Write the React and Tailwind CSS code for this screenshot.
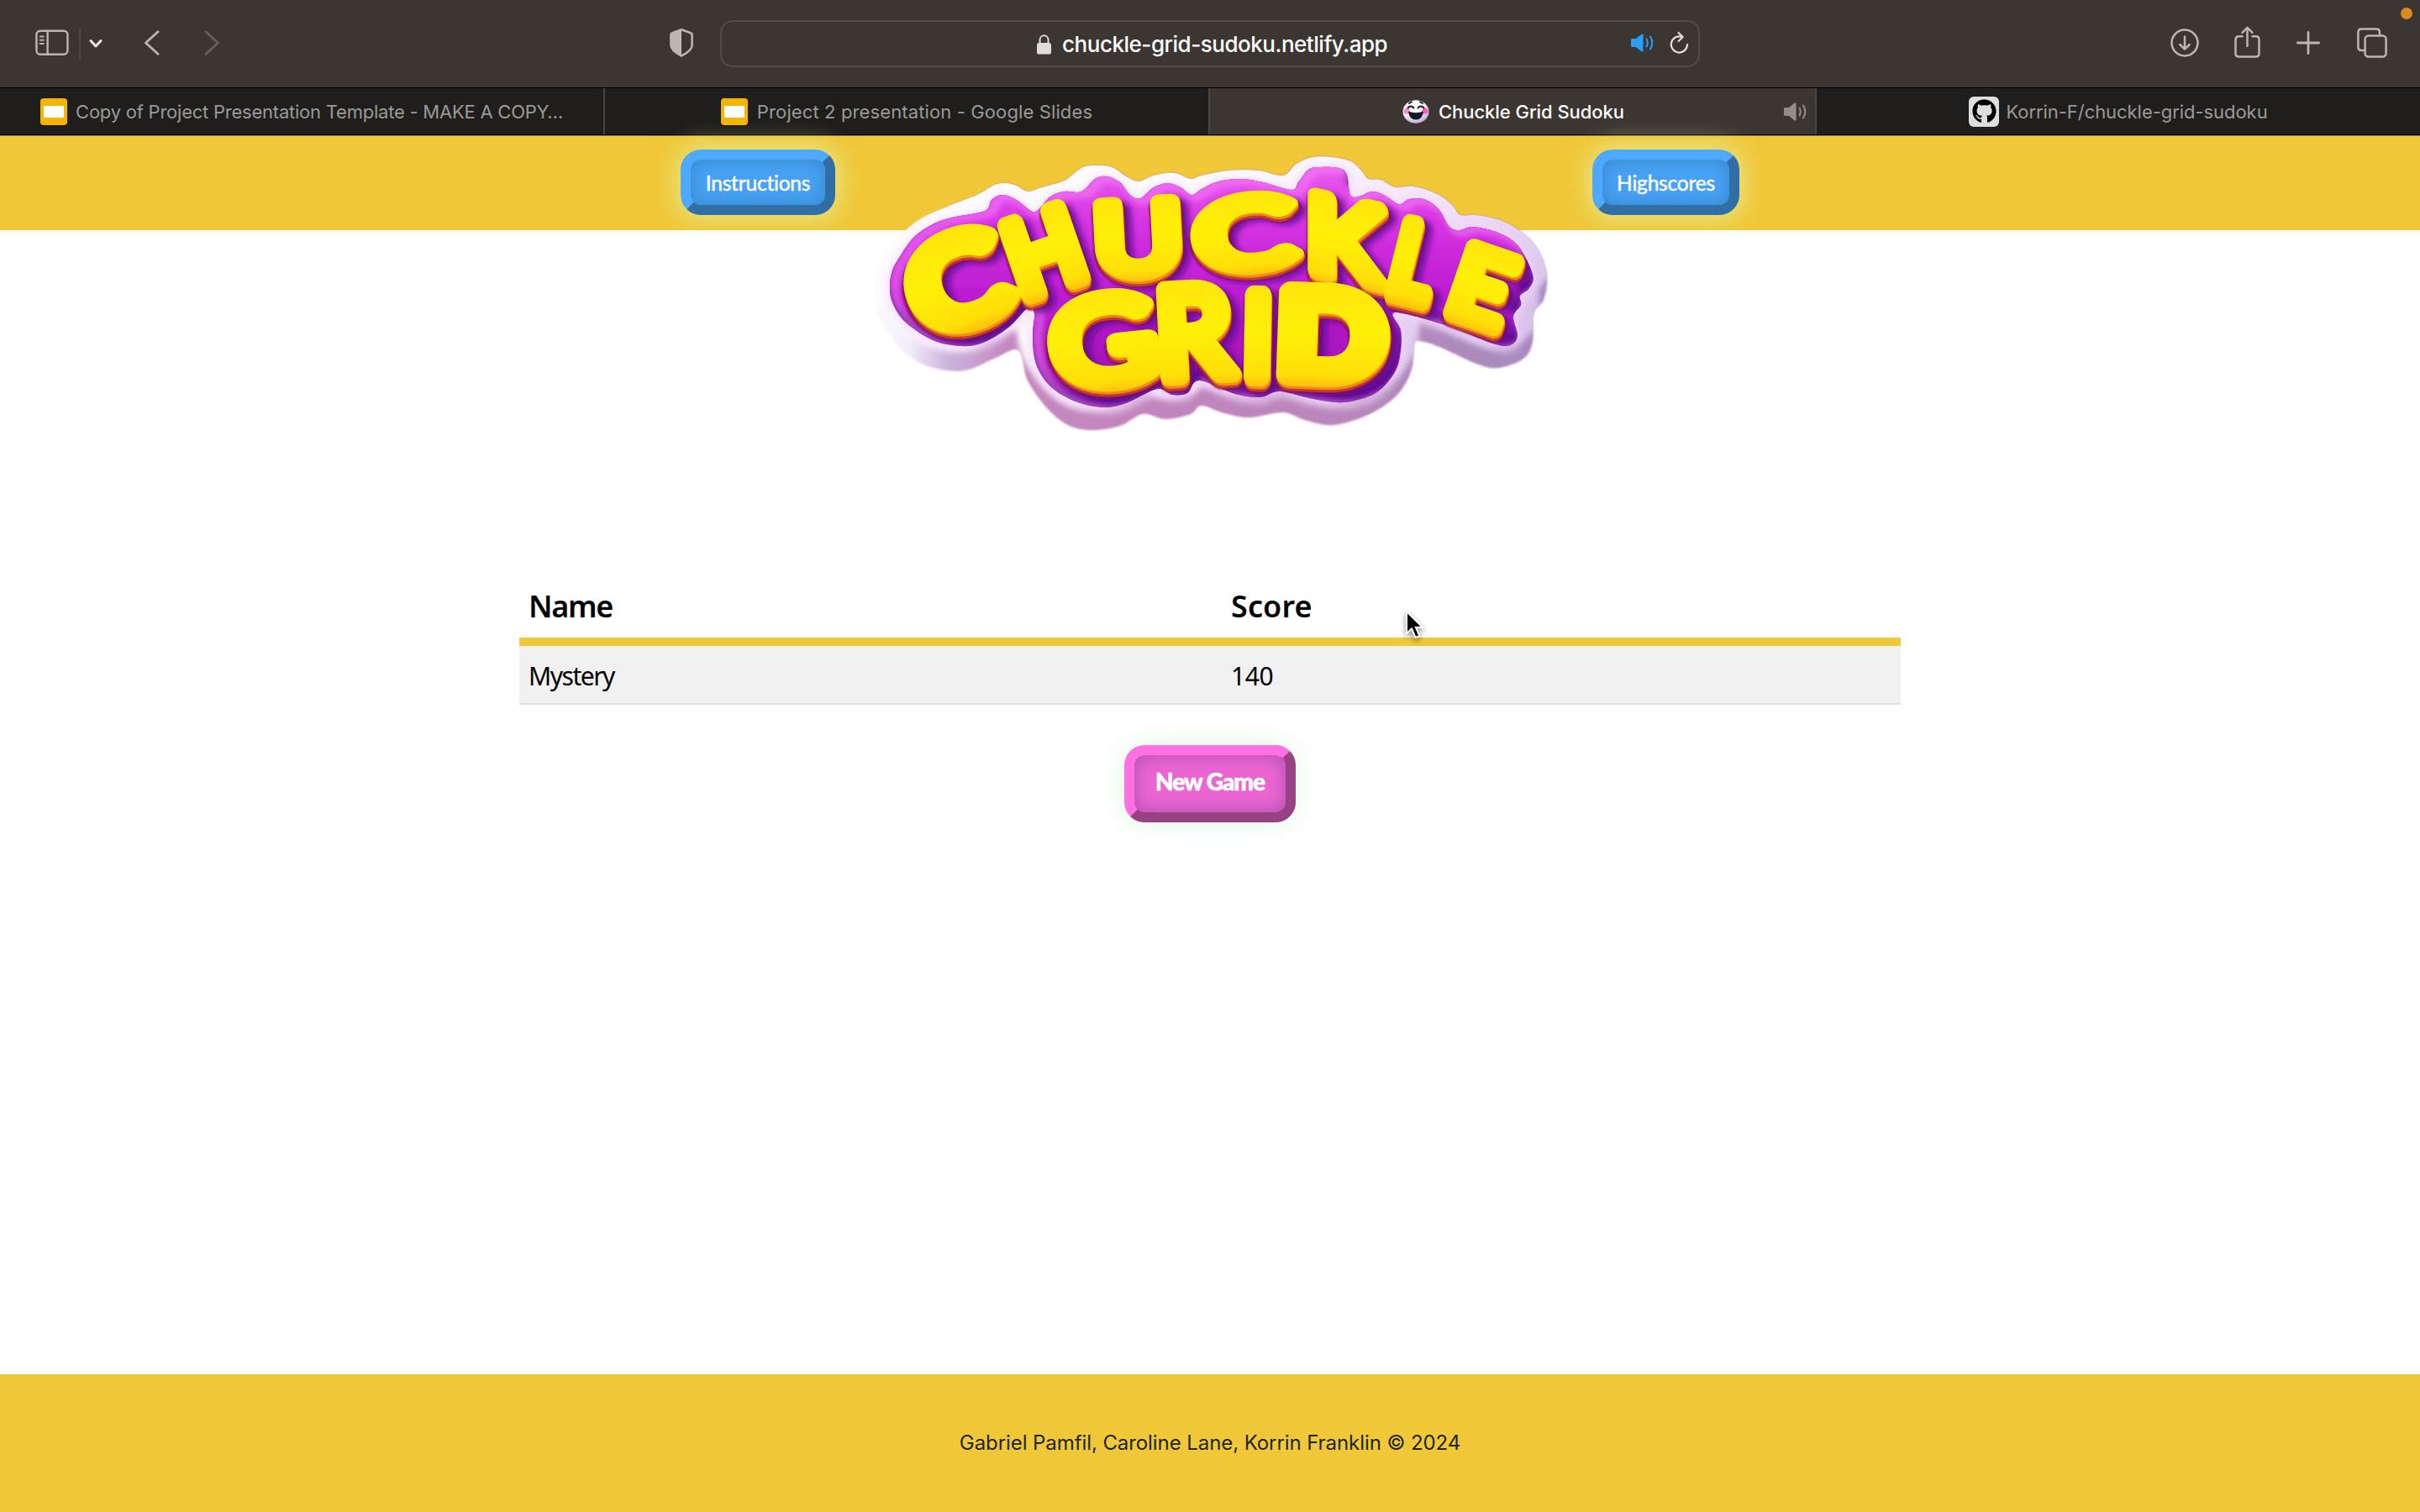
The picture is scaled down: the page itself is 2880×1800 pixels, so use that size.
import React from "react";
import { FaGithub } from "react-icons/fa";

/* ---------- browser chrome ---------- */

const stroke = { fill: "none", stroke: "#bcb6b2", strokeLinecap: "round", strokeLinejoin: "round" };

const SidebarIcon = () => (
  <svg width="40" height="32" viewBox="0 0 40 32" {...stroke} strokeWidth="2.4">
    <rect x="1.4" y="1.8" width="37" height="28" rx="4.5" />
    <path d="M14.6 2v28" />
    <path d="M5.8 8.5h4M5.8 12.8h4M5.8 17.1h4" strokeWidth="2" />
  </svg>
);

const ShieldIcon = () => (
  <svg width="28" height="34" viewBox="0 0 28 34">
    <path d="M14 1.3 25 5.2q1.6.6 1.6 2.2V20q0 6-12.6 12.6Q1.4 26 1.4 20V7.4Q1.4 5.8 3 5.2Z" fill="none" stroke="#bcb6b2" strokeWidth="2.5" strokeLinejoin="round" />
    <path d="M14 1 3 5Q1 5.8 1 7.5V20Q1 26 14 33Z" fill="#bcb6b2" />
  </svg>
);

const LockIcon = () => (
  <svg width="17" height="24" viewBox="0 0 17 24">
    <rect x="0" y="10" width="17" height="13.5" rx="2.6" fill="#dedddc" />
    <path d="M3.5 11V6.5a5 5.2 0 0 1 10 0V11" fill="none" stroke="#dedddc" strokeWidth="2" />
  </svg>
);

const SpeakerIcon = ({ color }) => (
  <svg width="28" height="22" viewBox="0 0 28 22" fill="none" stroke={color} strokeWidth="2" strokeLinecap="round">
    <path d="M0 7.5Q0 6 1.5 6H6L12.5.7Q14.5-.3 14.5 1.6V20.4Q14.5 22.3 12.5 21.3L6 16H1.5Q0 16 0 14.5Z" fill={color} stroke="none" />
    <path d="M18.5 6.5Q21 11 18.5 15.5M23 3.5Q27.6 11 23 18.5" />
  </svg>
);

const ReloadIcon = () => (
  <svg width="23" height="28" viewBox="0 0 23 28" fill="none" stroke="#dedddc" strokeWidth="2.2" strokeLinecap="round" strokeLinejoin="round">
    <path d="M14.6 6.9A9.6 9.6 0 1 0 21 16" />
    <path d="M10.5 2 15.6 7l-5 5" />
  </svg>
);

const DownloadIcon = () => (
  <svg width="34" height="34" viewBox="0 0 34 34" {...stroke} strokeWidth="2.5">
    <circle cx="17" cy="17" r="15.5" />
    <path d="M17 9.5v15M11.3 19 17 24.7 22.7 19" />
  </svg>
);

const ShareIcon = () => (
  <svg width="31" height="38" viewBox="0 0 31 38" {...stroke} strokeWidth="2.5">
    <path d="M9.5 12.2H5.5q-4 0-4 4V32.5q0 4 4 4h20q4 0 4-4V16.2q0-4-4-4h-4" />
    <path d="M15.5 24V2M9.5 7.8l6-6 6 6" />
  </svg>
);

const PlusIcon = () => (
  <svg width="28" height="28" viewBox="0 0 28 28" {...stroke} strokeWidth="2.8">
    <path d="M14 1.4v25.2M1.4 14h25.2" />
  </svg>
);

const TabsIcon = () => (
  <svg width="36" height="36" viewBox="0 0 36 36" {...stroke} strokeWidth="2.5">
    <rect x="9.6" y="9.6" width="25" height="25" rx="4" />
    <path d="M9 27H5.4q-4 0-4-4V5.4q0-4 4-4H23q4 0 4 4V9" />
  </svg>
);

const SlidesIcon = () => (
  <span className="flex h-8 w-8 items-center justify-center rounded-[4px] bg-[#f6b402]">
    <span className="h-[14px] w-6 bg-white" />
  </span>
);

const SmileyIcon = () => (
  <svg width="32" height="28" viewBox="0 0 32 28">
    <defs>
      <radialGradient id="face" cx=".4" cy=".3" r=".75">
        <stop offset=".5" stopColor="#fff" />
        <stop offset="1" stopColor="#b79bd0" />
      </radialGradient>
    </defs>
    <ellipse cx="16" cy="14" rx="15.5" ry="13.8" fill="url(#face)" />
    <circle cx="5.2" cy="13.2" r="3.6" fill="#ff86c8" />
    <circle cx="26.8" cy="13.2" r="3.6" fill="#ff5fae" />
    <path d="M6.5 9.5q3.5-4 7 0M18.5 9.5q3.5-4 7 0M8 4l3-1.8M24 4l-3-1.8" fill="none" stroke="#15182a" strokeWidth="1.9" strokeLinecap="round" />
    <path d="M7 13.5Q16 17 25 13.5 24 23.5 16 23.5T7 13.5Z" fill="#15182a" />
  </svg>
);

const Toolbar = () => (
  <div className="relative flex h-[104px] items-center bg-[#3c3633]">
    <div className="ml-[42px] mt-[-2px] flex items-center"><SidebarIcon /></div>
    <div className="ml-[12px] h-9 w-[2px] bg-[#4f4946]" />
    <svg className="ml-[10px] mt-[-1px]" width="16" height="12" viewBox="0 0 16 12" fill="none" stroke="#ece9e7" strokeWidth="3" strokeLinecap="round" strokeLinejoin="round"><path d="M2 2.5 8 9l6-6.5" /></svg>
    <svg className="ml-[49px] mt-[-3px]" width="19" height="30" viewBox="0 0 19 30" {...stroke} strokeWidth="2.8"><path d="M17 1.8 2.5 15 17 28.2" /></svg>
    <svg className="ml-[53px] mt-[-3px]" width="19" height="30" viewBox="0 0 19 30" {...stroke} stroke="#66605d" strokeWidth="2.8"><path d="M2 1.8 16.5 15 2 28.2" /></svg>
    <div className="ml-[535px] mt-[-2px]"><ShieldIcon /></div>
    <div className="ml-[32px] flex h-[56px] w-[1166px] items-center rounded-[15px] border-2 border-[#524d49]">
      <div className="ml-[375px] mt-[1px]"><LockIcon /></div>
      <span className="ml-[13px] mt-[1px] w-[389px] whitespace-nowrap font-['Inter'] text-[26px] font-medium leading-[40px] tracking-[-0.47px] text-white">chuckle-grid-sudoku.netlify.app</span>
      <div className="ml-[288px] mt-[-3px]"><SpeakerIcon color="#2a9dfb" /></div>
      <div className="ml-[18px] mt-[-3px]"><ReloadIcon /></div>
    </div>
    <div className="ml-[560px] mt-[-2px]"><DownloadIcon /></div>
    <div className="ml-[42px] mt-[-5px]"><ShareIcon /></div>
    <div className="ml-[43px] mt-[-3px]"><PlusIcon /></div>
    <div className="ml-[44px] mt-[-3px]"><TabsIcon /></div>
    <span className="absolute right-[9px] top-[9px] h-[14px] w-[14px] rounded-full bg-[#d98a24]" />
  </div>
);

const tabs = [
  { title: "Copy of Project Presentation Template - MAKE A COPY…", icon: <SlidesIcon />, cls: "w-[720px] border-r-2 border-[#4a4542] bg-[#1f1e1c] text-[#9b9a98]", text: "ml-[10px] tracking-[-0.23px]" },
  { title: "Project 2 presentation - Google Slides", icon: <SlidesIcon />, cls: "w-[720px] border-r-2 border-[#4a4542] bg-[#1f1e1c] text-[#9b9a98]", text: "ml-[11px] tracking-[0.12px]" },
  { title: "Chuckle Grid Sudoku", icon: <SmileyIcon />, cls: "w-[720px] bg-[#3c3633] text-white font-medium", text: "ml-[11px] mr-[-2px] tracking-[-0.06px]", audio: true },
  { title: "Korrin-F/chuckle-grid-sudoku", icon: <span className="flex h-9 w-9 items-center justify-center rounded-[6px] bg-[#dedede]"><FaGithub size={29} color="#000" /></span>, cls: "w-[720px] border-l-2 border-[#4a4542] bg-[#1f1e1c] text-[#9b9a98]", text: "ml-[8px] tracking-[-0.05px]" },
];

const TabBar = () => (
  <div className="flex h-[57px] border-y border-black">
    {tabs.map((t) => (
      <div key={t.title} className={`relative flex items-center justify-center font-['Inter'] text-[22px] ${t.cls}`}>
        {t.icon}
        <span className={`whitespace-nowrap leading-[32px] ${t.text}`}>{t.title}</span>
        {t.audio && <div className="absolute right-[9px] top-[17px]"><SpeakerIcon color="#918e8c" /></div>}
      </div>
    ))}
  </div>
);

/* ---------- logo ---------- */

/* Closed Catmull-Rom curve through the given points. */
const smooth = (p) => {
  const n = p.length;
  let d = `M${p[0]}`;
  for (let i = 0; i < n; i++) {
    const a = p[(i - 1 + n) % n], b = p[i], c = p[(i + 1) % n], e = p[(i + 2) % n];
    d += `C${b[0] + (c[0] - a[0]) / 6},${b[1] + (c[1] - a[1]) / 6} ${c[0] - (e[0] - b[0]) / 6},${c[1] - (e[1] - b[1]) / 6} ${c}`;
  }
  return d + "Z";
};

const rim = smooth([[1040,347],[1047,310],[1070,282],[1097,260],[1130,245],[1163,232],[1187,219],[1207,220],[1223,228],[1240,223],[1267,215],[1287,200],[1303,197],[1323,199],[1340,210],[1355,216],[1373,209],[1397,206],[1417,213],[1430,209],[1463,203],[1497,203],[1527,209],[1543,195],[1563,187],[1583,187],[1607,192],[1620,203],[1628,213],[1643,214],[1660,223],[1683,222],[1710,231],[1727,243],[1738,256],[1757,256],[1787,263],[1813,278],[1832,300],[1841,330],[1837,357],[1825,373],[1824,407],[1813,427],[1783,438],[1757,433],[1713,413],[1690,406],[1683,410],[1680,440],[1663,470],[1630,493],[1587,506],[1553,500],[1527,491],[1487,497],[1457,492],[1430,483],[1417,493],[1387,499],[1360,493],[1333,507],[1300,512],[1273,507],[1247,487],[1223,453],[1212,417],[1183,427],[1153,440],[1127,441],[1097,433],[1070,413],[1047,380]]);

const board = smooth([[1059,340],[1062,322],[1070,307],[1087,283],[1110,267],[1133,259],[1172,251],[1180,238],[1193,232],[1210,238],[1227,251],[1235,250],[1250,234],[1267,228],[1287,228],[1303,213],[1317,210],[1333,217],[1345,232],[1357,236],[1373,223],[1390,218],[1405,223],[1418,232],[1430,225],[1450,216],[1477,213],[1503,217],[1537,226],[1545,217],[1557,202],[1570,199],[1593,200],[1603,208],[1607,232],[1617,234],[1633,228],[1647,232],[1665,243],[1677,237],[1697,238],[1713,250],[1725,270],[1737,274],[1753,270],[1783,277],[1807,293],[1824,327],[1820,343],[1809,352],[1810,363],[1801,377],[1806,400],[1797,411],[1777,409],[1720,387],[1660,372],[1667,393],[1667,417],[1660,443],[1637,468],[1600,479],[1563,475],[1523,466],[1500,473],[1470,469],[1427,453],[1413,468],[1395,470],[1377,463],[1340,480],[1313,485],[1280,478],[1250,460],[1233,433],[1229,400],[1231,373],[1223,367],[1200,390],[1170,408],[1143,412],[1110,405],[1077,383],[1062,360]]);

/* ink: left, right, ascent, descent of the glyph at 100px; box: width and height it fills */
const letters = [
  { ch: "C", ink: [4, 61, 73, 1], at: [1137, 336], box: [126, 128], rot: -20, s: 17 },
  { ch: "H", ink: [9, 65, 72, 0], at: [1241, 300], box: [84, 110], rot: -19, s: 19 },
  { ch: "U", ink: [8, 65, 72, 1], at: [1354, 284], box: [104, 103], rot: -3, s: 15 },
  { ch: "C", ink: [4, 61, 73, 1], at: [1479, 278], box: [128, 101], rot: -5, s: 15 },
  { ch: "K", ink: [9, 63, 72, 0], at: [1603, 286], box: [94, 110], rot: 0, skew: 12, s: 16 },
  { ch: "L", ink: [9, 45, 72, 0], at: [1683, 312], box: [52, 110], rot: 14, s: 19 },
  { ch: "E", ink: [9, 52, 72, 0], at: [1765, 342], box: [72, 104], rot: 19, s: 17 },
  { ch: "G", ink: [4, 63, 73, 1], at: [1308, 406], box: [126, 124], rot: -6, s: 14 },
  { ch: "R", ink: [9, 60, 72, 0], at: [1425, 395], box: [94, 126], rot: -3, s: 14 },
  { ch: "I", ink: [9, 18, 72, 0], at: [1496, 400], box: [31, 121], rot: 1, s: 19 },
  { ch: "D", ink: [9, 71, 72, 0], at: [1587, 399], box: [134, 125], rot: 2, s: 19 },
];

const Letters = ({ dx = 0, dy = 0, color, grow = 0 }) => (
  <g fill={color} stroke={color} strokeLinejoin="round">
    {letters.map(({ ch, ink: [l, r, a, b], at, box, rot, skew = 0, s }, i) => (
      <text
        key={i}
        className="font-['Lato'] text-[100px] font-normal"
        strokeWidth={s + grow}
        transform={`translate(${at[0] + dx} ${at[1] + dy}) rotate(${rot}) skewY(${skew}) scale(${box[0] / (r - l + s)} ${box[1] / (a + b + s)}) translate(${-(l + r) / 2} ${(a - b) / 2})`}
      >
        {ch}
      </text>
    ))}
  </g>
);

const Logo = () => (
  <svg className="absolute left-[1030px] top-[18px]" width="824" height="342" viewBox="1030 180 824 342" role="img" aria-label="Chuckle Grid">
    <defs>
      <linearGradient id="rimSide" x1="0" x2="1"><stop offset="0" stopColor="#fcfafe" /><stop offset=".05" stopColor="#f4eefa" /><stop offset=".11" stopColor="#cbb4dc" /><stop offset=".2" stopColor="#c687bf" /><stop offset=".65" stopColor="#bb86ba" /><stop offset="1" stopColor="#a68cc0" /></linearGradient>
      <linearGradient id="rimTop" x1="0" y1="0" x2="1" y2=".6"><stop offset="0" stopColor="#fff" /><stop offset=".5" stopColor="#fcf8fe" /><stop offset=".75" stopColor="#f3e0fa" /><stop offset="1" stopColor="#d9c2ea" /></linearGradient>
      <linearGradient id="boardTop" x1="0" y1="0" x2="0" y2="1"><stop offset="0" stopColor="#ee62f0" /><stop offset=".28" stopColor="#d533e2" /><stop offset=".6" stopColor="#b91bd0" /><stop offset="1" stopColor="#9a12ac" /></linearGradient>
      <clipPath id="rimClip"><path d={rim} /></clipPath>
      <clipPath id="boardClip"><path d={board} /></clipPath>
      <filter id="b1" x="-5%" y="-5%" width="110%" height="110%"><feGaussianBlur stdDeviation="1.2" /></filter>
      <filter id="b3" x="-5%" y="-5%" width="110%" height="110%"><feGaussianBlur stdDeviation="3.5" /></filter>
      <linearGradient id="yellow" gradientUnits="userSpaceOnUse" x1="0" y1="-78" x2="0" y2="9"><stop offset="0" stopColor="#ffe60a" /><stop offset=".45" stopColor="#fff008" /><stop offset=".88" stopColor="#ffdf08" /><stop offset="1" stopColor="#fdc00d" /></linearGradient>
    </defs>

    <path d={rim} fill="url(#rimSide)" filter="url(#b1)" />
    <g clipPath="url(#rimClip)">
      <path d={rim} fill="url(#rimTop)" stroke="url(#rimTop)" strokeWidth="14" transform="translate(0 -31)" filter="url(#b3)" />
      <path d={board} fill="none" stroke="#f1d6fa" strokeWidth="12" transform="translate(0 3)" filter="url(#b3)" opacity=".5" />
    </g>

    <path d={board} fill="#5c0a8c" />
    <g clipPath="url(#boardClip)">
      <path d={board} fill="url(#boardTop)" transform="translate(-3 -12)" filter="url(#b3)" />
      <path d={board} fill="none" stroke="#fb86fa" strokeWidth="12" transform="translate(6 2)" filter="url(#b3)" opacity=".5" />
      <g filter="url(#b3)" opacity=".85"><Letters dx={8} dy={8} color="#5d0a90" grow={3} /></g>
    </g>
    <g filter="url(#b1)"><Letters dx={1} dy={5} color="#8d0f55" grow={3} /></g>
    <Letters dx={1} dy={6} color="#c23a30" />
    <Letters dx={1} dy={3} color="#f08a18" />
    <Letters color="url(#yellow)" />
  </svg>
);

/* ---------- page ---------- */

const NavButton = ({ children, width }) => (
  <button className={`relative flex h-[78px] items-center justify-center rounded-[24px] border-[12px] border-l-[#4daaff] border-t-[#4daaff] border-b-[#316ea6] border-r-[#316ea6] bg-[#48a2f5] pt-[2px] font-['Lato'] text-[24.5px] font-normal tracking-[-0.2px] text-white [-webkit-text-stroke:0.5px_white] shadow-[0_0_28px_4px_rgba(230,240,170,0.75),inset_0_0_20px_rgba(40,110,170,0.55)] ${width}`}>
    <span className="leading-[30px]">{children}</span>
  </button>
);

const Header = () => (
  <header className="relative h-[113px] border-t border-[#8f7826] bg-[#f0c838] px-[810px] pt-[16px]">
    <nav className="flex justify-between">
      <NavButton width="w-[184px]">Instructions</NavButton>
      <NavButton width="w-[175px]">Highscores</NavButton>
    </nav>
    <Logo />
  </header>
);

const Cursor = () => (
  <svg className="absolute left-[1054px] top-[34px] drop-shadow-[0_3px_3px_rgba(0,0,0,0.45)]" width="24" height="36" viewBox="0 0 24 36">
    <path d="M2 2v26l6-5.5 4.6 10.5 4.8-2L12.9 20.7H21Z" fill="#000" stroke="#fff" strokeWidth="2" />
  </svg>
);

const Scores = () => (
  <div className="relative ml-[618px] mt-[418px] w-[1644px] font-['Noto_Sans'] text-black">
    <div className="box-content flex h-[67px] items-center border-b-[10px] border-[#f0c838] text-[36px] font-semibold">
      <span className="mt-[-7px] w-[835px] pl-[11px] leading-[50px] tracking-[-1.3px]">Name</span>
      <span className="mt-[-7px] pl-[12px] leading-[50px] tracking-[0.1px]">Score</span>
    </div>
    <div className="flex h-[68px] items-center bg-[#f1f1f1] text-[30px]">
      <span className="mt-[4px] w-[835px] pl-[11px] leading-[42px] tracking-[-1.5px]">Mystery</span>
      <span className="mt-[4px] pl-[12px] leading-[42px] tracking-[-0.4px]">140</span>
    </div>
    <div className="h-[2px] bg-[#dee2e6]" />
    <Cursor />
  </div>
);

export default function App() {
  return (
    <div className="flex h-[1800px] w-[2880px] flex-col overflow-hidden bg-white">
      <Toolbar />
      <TabBar />
      <Header />
      <main className="flex flex-1 flex-col">
        <Scores />
        <button className="mt-[48px] flex h-[92px] w-[204px] items-center justify-center self-center rounded-[24px] border-[12px] border-l-[#ff70e3] border-t-[#ff70e3] border-b-[#974285] border-r-[#974285] bg-[#ec66d3] pb-[6px] font-['Lato'] text-[28px] font-black tracking-[-1px] text-white [-webkit-text-stroke:0.6px_white] shadow-[0_0_28px_rgba(190,245,190,0.5),inset_0_0_22px_rgba(120,60,140,0.55)]">
          New Game
        </button>
      </main>
      <footer className="flex h-[164px] items-center justify-center bg-[#f0c838] font-['Inter'] text-[24px] text-[#212529]">
        <span className="leading-[36px] tracking-[-0.08px]">Gabriel Pamfil, Caroline Lane, Korrin Franklin © 2024</span>
      </footer>
    </div>
  );
}
